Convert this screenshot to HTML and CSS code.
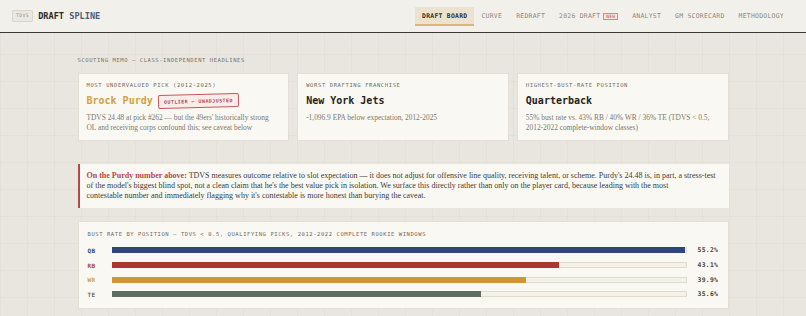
FILE: index.html
```html
<!DOCTYPE html>
<html lang="en">
<head>
    <meta charset="UTF-8">
    <meta name="viewport" content="width=device-width, initial-scale=1.0">
    <title>TDVS Draft Spline</title>
    <link rel="stylesheet" href="styles.css">
</head>
<body>
    <div class="topbar">
        <div class="brand">
            <span class="brand-tag">TDVS</span>
            <span class="brand-name">DRAFT <span class="accent">SPLINE</span></span>
        </div>
        <div class="nav">
            <a class="nav-item active">DRAFT BOARD</a>
            <a class="nav-item">CURVE</a>
            <a class="nav-item">REDRAFT</a>
            <a class="nav-item">2026 DRAFT <span class="new-tag">NEW</span></a>
            <a class="nav-item">ANALYST</a>
            <a class="nav-item">GM SCORECARD</a>
            <a class="nav-item">METHODOLOGY</a>
        </div>
    </div>

    <div class="page">
        <div class="section-label">SCOUTING MEMO — CLASS-INDEPENDENT HEADLINES</div>

        <div class="cards">
            <div class="card">
                <div class="card-label">MOST UNDERVALUED PICK (2012-2025)</div>
                <div class="card-title gold">Brock Purdy <span class="stamp">OUTLIER — UNADJUSTED</span></div>
                <p class="card-text">TDVS 24.48 at pick #262 — but the 49ers' historically strong OL and receiving corps confound this; see caveat below</p>
            </div>
            <div class="card">
                <div class="card-label">WORST DRAFTING FRANCHISE</div>
                <div class="card-title">New York Jets</div>
                <p class="card-text">-1,096.9 EPA below expectation, 2012-2025</p>
            </div>
            <div class="card">
                <div class="card-label">HIGHEST-BUST-RATE POSITION</div>
                <div class="card-title">Quarterback</div>
                <p class="card-text">55% bust rate vs. 43% RB / 40% WR / 36% TE (TDVS &lt; 0.5, 2012-2022 complete-window classes)</p>
            </div>
        </div>

        <div class="memo">
            <p><strong>On the Purdy number above:</strong> TDVS measures outcome relative to slot expectation — it does not adjust for offensive line quality, receiving talent, or scheme. Purdy's 24.48 is, in part, a stress-test of the model's biggest blind spot, not a clean claim that he's the best value pick in isolation. We surface this directly rather than only on the player card, because leading with the most<br>contestable number and immediately flagging why it's contestable is more honest than burying the caveat.</p>
        </div>

        <div class="panel">
            <div class="panel-label">BUST RATE BY POSITION — TDVS &lt; 0.5, QUALIFYING PICKS, 2012-2022 COMPLETE ROOKIE WINDOWS</div>
            <div class="bar-row">
                <span class="bar-label qb">QB</span>
                <div class="bar-track"><div class="bar-fill qb-fill" style="width:100%"></div></div>
                <span class="bar-value">55.2%</span>
            </div>
            <div class="bar-row">
                <span class="bar-label rb">RB</span>
                <div class="bar-track"><div class="bar-fill rb-fill" style="width:78.1%"></div></div>
                <span class="bar-value">43.1%</span>
            </div>
            <div class="bar-row">
                <span class="bar-label wr">WR</span>
                <div class="bar-track"><div class="bar-fill wr-fill" style="width:72.3%"></div></div>
                <span class="bar-value">39.9%</span>
            </div>
            <div class="bar-row">
                <span class="bar-label te">TE</span>
                <div class="bar-track"><div class="bar-fill te-fill" style="width:64.5%"></div></div>
                <span class="bar-value">35.6%</span>
            </div>
        </div>
    </div>
</body>
</html>
```

FILE: styles.css
```css
body {
    margin: 0;
    min-height: 575px;
    font-family: "DejaVu Sans Mono", monospace;
    color: #2b2a27;
    background-color: #e9e6df;
    background-image:
        linear-gradient(rgba(0, 0, 0, 0.018) 1px, transparent 1px),
        linear-gradient(90deg, rgba(0, 0, 0, 0.018) 1px, transparent 1px);
    background-size: 27px 27px;
}

.topbar {
    height: 32px;
    background-color: #f2f0ea;
    border-bottom: 1px solid #3a3834;
    display: flex;
    align-items: center;
    justify-content: space-between;
    padding: 0 15px 0 12px;
}

.brand {
    display: flex;
    align-items: center;
    gap: 5px;
}

.brand-tag {
    font-size: 4.8px;
    letter-spacing: 0.4px;
    color: #98958d;
    background-color: #ebe8e1;
    border: 1px solid #d9d5cb;
    border-radius: 1px;
    padding: 2px 3px;
    line-height: 6px;
}

.brand-name {
    font-size: 8.6px;
    font-weight: bold;
    color: #2b2a27;
}

.brand-name .accent {
    color: #4d5d7c;
}

.nav {
    display: flex;
    align-items: center;
    height: 32px;
}

.nav-item {
    font-size: 6.4px;
    letter-spacing: 0.28px;
    color: #8c8981;
    padding: 0 7px;
    height: 18px;
    line-height: 18px;
    display: flex;
    align-items: center;
    gap: 3px;
}

.nav-item.active {
    background-color: #ebe3cf;
    color: #33312c;
    font-weight: bold;
    border-bottom: 2px solid #d9b877;
    height: 17px;
    margin-top: 1px;
}

.new-tag {
    font-size: 4.4px;
    line-height: 5px;
    letter-spacing: 0.3px;
    color: #c0504d;
    background-color: #f7e4df;
    border: 1px solid #d68a86;
    padding: 0 2px;
}

.page {
    width: 651px;
    margin: 0 auto;
    padding-top: 23px;
}

.section-label {
    font-size: 5.5px;
    letter-spacing: 0.58px;
    line-height: 8px;
    color: #75726a;
    margin-bottom: 9px;
}

.cards {
    display: grid;
    grid-template-columns: 1fr 1fr 1fr;
    gap: 8px;
}

.card {
    background-color: #faf8f2;
    border: 1px solid #e3dfd5;
    padding: 7px 9px 7px 8px;
}

.card-label {
    font-size: 5.5px;
    letter-spacing: 0.62px;
    line-height: 8px;
    color: #6f6c65;
}

.card-title {
    font-size: 10px;
    font-weight: bold;
    line-height: 16px;
    margin-top: 4px;
    display: flex;
    align-items: center;
    color: #252421;
}

.card-title.gold {
    color: #d3a142;
}

.stamp {
    font-size: 4.9px;
    letter-spacing: 0.5px;
    line-height: 12px;
    color: #b5474a;
    background-color: #f9ecea;
    border: 1.5px solid #c05a5c;
    border-radius: 2px;
    padding: 0 5px;
    margin-left: 5px;
    transform: rotate(-1.5deg);
}

.card-text {
    font-family: "Liberation Serif", serif;
    font-size: 7.4px;
    line-height: 10px;
    color: #7c7971;
    margin: 4px 0 0;
}

.memo {
    margin-top: 23px;
    background-color: #faf8f2;
    border-left: 2px solid #b5474a;
    padding: 7px 10px 7px 7px;
}

.memo p {
    font-family: "Liberation Serif", serif;
    font-size: 8px;
    line-height: 10px;
    color: #403d37;
    margin: 0;
}

.memo strong {
    color: #b5474a;
}

.panel {
    margin-top: 13px;
    background-color: #faf8f2;
    border: 1px solid #e3dfd5;
    padding: 8px 9px 6px 9px;
}

.panel-label {
    font-size: 5.5px;
    letter-spacing: 0.58px;
    line-height: 8px;
    color: #6f6c65;
    margin-bottom: 5px;
}

.bar-row {
    display: flex;
    align-items: center;
    height: 14.7px;
}

.bar-label {
    width: 24px;
    font-size: 6px;
    font-weight: bold;
    letter-spacing: 0.3px;
}

.bar-label.qb { color: #2d4775; }
.bar-label.rb { color: #b03d33; }
.bar-label.wr { color: #d19c3a; }
.bar-label.te { color: #5e6b5f; }

.bar-track {
    flex: 1;
    height: 6px;
    background-color: #f4f1e9;
    border: 1px solid #e1dcd0;
    box-sizing: border-box;
    display: flex;
}

.bar-fill {
    height: 6px;
    margin: -1px 0 0 -1px;
}

.qb-fill { background-color: #2d4878; }
.rb-fill { background-color: #a9392d; }
.wr-fill { background-color: #cf9633; }
.te-fill { background-color: #606d61; }

.bar-value {
    width: 21px;
    margin-left: 11px;
    font-size: 6.4px;
    font-weight: bold;
    letter-spacing: 0.3px;
    color: #4a4740;
}
```
